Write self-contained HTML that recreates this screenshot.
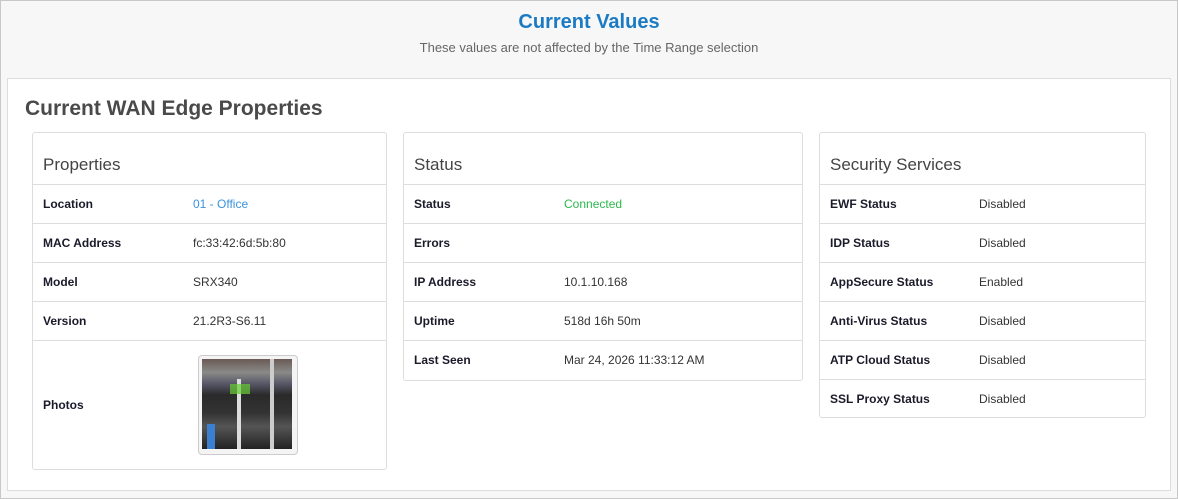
<!DOCTYPE html>
<html><head><style>
*{box-sizing:border-box;margin:0;padding:0}
body{width:1178px;height:499px;font-family:"Liberation Sans",sans-serif;background:#f7f7f7;position:relative;overflow:hidden}
.outer{position:absolute;left:0;top:0;width:1178px;height:499px;border:1px solid #c8c8c8;}
.t1{position:absolute;top:11px;left:0;width:1178px;text-align:center;color:#1a7bc4;font-size:20px;font-weight:bold}
.t2{position:absolute;top:40px;left:0;width:1178px;text-align:center;color:#666;font-size:13px}
.panel{position:absolute;left:7px;top:78px;width:1164px;height:413px;background:#fff;border:1px solid #ddd}
h2{position:absolute;left:25px;top:97px;font-size:21px;color:#4a4a4a;font-weight:bold}
.card{position:absolute;top:132px;border:1px solid #ddd;border-radius:3px;background:#fff}
.hd{height:52px;padding:22px 0 0 10px;font-size:17px;color:#444;border-bottom:1px solid #ddd}
.row{height:39px;border-bottom:1px solid #ddd;position:relative;font-size:12px;color:#333}
.row:last-child{border-bottom:none}
.row b{position:absolute;left:10px;top:12px;color:#1a1a2a}
.row span{position:absolute;top:12px}
</style></head><body>
<div class="outer"></div>
<div class="t1">Current Values</div>
<div class="t2">These values are not affected by the Time Range selection</div>
<div class="panel"></div>
<h2>Current WAN Edge Properties</h2>
<div class="card" style="left:32px;width:355px;height:338px">
<div class="hd">Properties</div>
<div class="row"><b>Location</b><span style="left:160px;color:#3a93dd">01 - Office</span></div>
<div class="row"><b>MAC Address</b><span style="left:160px">fc:33:42:6d:5b:80</span></div>
<div class="row"><b>Model</b><span style="left:160px">SRX340</span></div>
<div class="row"><b>Version</b><span style="left:160px">21.2R3-S6.11</span></div>
<div class="row" style="height:128px"><b style="top:57px">Photos</b>
<div style="position:absolute;left:165px;top:14px;width:100px;height:100px;border:1px solid #ccc;border-radius:4px;background:#f4f4f4;padding:2px">
<div style="width:90px;height:90px;margin:1px;background:linear-gradient(180deg,#6a5a55 0,#8a8a88 15%,#556 28%,#2a2a2a 40%,#333 60%,#555 75%,#222 100%);position:relative;overflow:hidden">
<div style="position:absolute;left:35px;top:20px;width:4px;height:70px;background:#ddd"></div>
<div style="position:absolute;left:68px;top:0;width:4px;height:90px;background:#ccc"></div>
<div style="position:absolute;left:28px;top:25px;width:20px;height:10px;background:#6c3;opacity:.7"></div>
<div style="position:absolute;left:5px;top:65px;width:8px;height:25px;background:#3a7fd0"></div>
</div></div></div>
</div>
<div class="card" style="left:403px;width:400px;height:249px">
<div class="hd">Status</div>
<div class="row"><b>Status</b><span style="left:160px;color:#2db84d">Connected</span></div>
<div class="row"><b>Errors</b></div>
<div class="row"><b>IP Address</b><span style="left:160px">10.1.10.168</span></div>
<div class="row"><b>Uptime</b><span style="left:160px">518d 16h 50m</span></div>
<div class="row"><b>Last Seen</b><span style="left:160px">Mar 24, 2026 11:33:12 AM</span></div>
</div>
<div class="card" style="left:819px;width:327px;height:286px">
<div class="hd">Security Services</div>
<div class="row"><b>EWF Status</b><span style="left:159px">Disabled</span></div>
<div class="row"><b>IDP Status</b><span style="left:159px">Disabled</span></div>
<div class="row"><b>AppSecure Status</b><span style="left:159px">Enabled</span></div>
<div class="row"><b>Anti-Virus Status</b><span style="left:159px">Disabled</span></div>
<div class="row"><b>ATP Cloud Status</b><span style="left:159px">Disabled</span></div>
<div class="row"><b>SSL Proxy Status</b><span style="left:159px">Disabled</span></div>
</div>
</body></html>
